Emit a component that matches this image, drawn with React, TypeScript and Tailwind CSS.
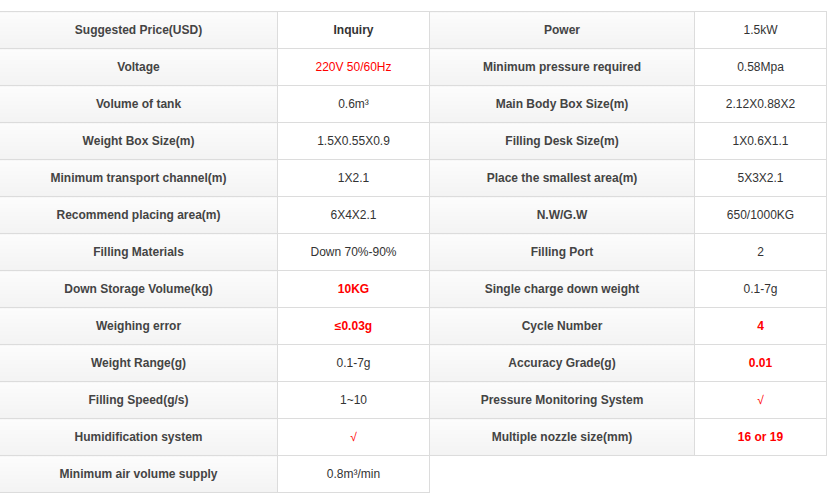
import React from "react";

type Cell = { t: string; red?: boolean; bold?: boolean };
type Row = [string, Cell, string?, Cell?];

const rows: Row[] = [
  ["Suggested Price(USD)", { t: "Inquiry", bold: true }, "Power", { t: "1.5kW" }],
  ["Voltage", { t: "220V 50/60Hz", red: true }, "Minimum pressure required", { t: "0.58Mpa" }],
  ["Volume of tank", { t: "0.6m³" }, "Main Body Box Size(m)", { t: "2.12X0.88X2" }],
  ["Weight Box Size(m)", { t: "1.5X0.55X0.9" }, "Filling Desk Size(m)", { t: "1X0.6X1.1" }],
  ["Minimum transport channel(m)", { t: "1X2.1" }, "Place the smallest area(m)", { t: "5X3X2.1" }],
  ["Recommend placing area(m)", { t: "6X4X2.1" }, "N.W/G.W", { t: "650/1000KG" }],
  ["Filling Materials", { t: "Down 70%-90%" }, "Filling Port", { t: "2" }],
  ["Down Storage Volume(kg)", { t: "10KG", red: true, bold: true }, "Single charge down weight", { t: "0.1-7g" }],
  ["Weighing error", { t: "≤0.03g", red: true, bold: true }, "Cycle Number", { t: "4", red: true, bold: true }],
  ["Weight Range(g)", { t: "0.1-7g" }, "Accuracy Grade(g)", { t: "0.01", red: true, bold: true }],
  ["Filling Speed(g/s)", { t: "1~10" }, "Pressure Monitoring System", { t: "√", red: true }],
  ["Humidification system", { t: "√", red: true }, "Multiple nozzle size(mm)", { t: "16 or 19", red: true, bold: true }],
  ["Minimum air volume supply", { t: "0.8m³/min" }],
];

function Label({ text, w }: { text: string; w: string }) {
  return (
    <td
      className={`${w} h-[37px] border border-[#dcdcdc] bg-gradient-to-b from-[#fcfcfc] to-[#f3f3f3] text-center align-middle font-bold text-[12px] text-[#444]`}
    >
      {text}
    </td>
  );
}

function Value({ c, w }: { c: Cell; w: string }) {
  return (
    <td
      className={`${w} h-[37px] border border-[#dcdcdc] bg-white text-center align-middle text-[12px] ${
        c.red ? "text-[#ff0000]" : "text-[#333]"
      } ${c.bold ? "font-bold" : "font-normal"}`}
    >
      {c.t}
    </td>
  );
}

export default function App() {
  return (
    <div
      className="w-[835px] h-[498px] bg-white pt-[11px]"
      style={{ fontFamily: '"Liberation Sans", Arial, sans-serif' }}
    >
      <table className="border-collapse table-fixed w-[827px] ml-[-1px]">
        <tbody>
          {rows.map((r, i) => (
            <tr key={i}>
              <Label text={r[0]} w="w-[278px]" />
              <Value c={r[1]} w="w-[152px]" />
              {r[2] ? (
                <>
                  <Label text={r[2]} w="w-[265px]" />
                  <Value c={r[3]!} w="w-[132px]" />
                </>
              ) : (
                <td colSpan={2} className="border-l border-[#dcdcdc]" />
              )}
            </tr>
          ))}
        </tbody>
      </table>
    </div>
  );
}
